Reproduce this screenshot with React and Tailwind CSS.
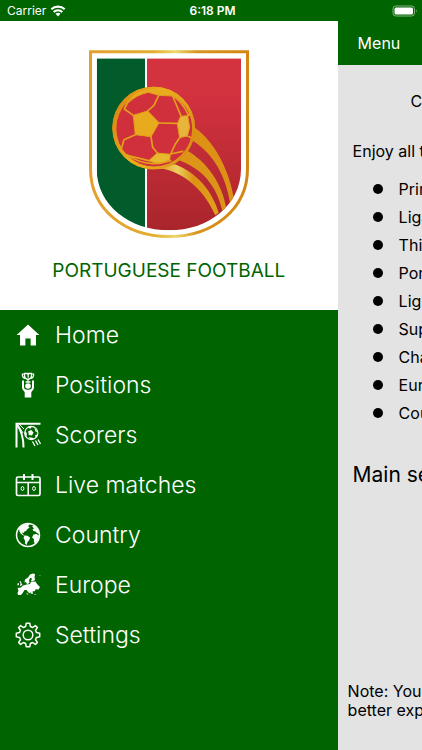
import React from "react";
import { IoMdHome } from "react-icons/io";

function Shield() {
  return (
    <svg viewBox="24 27 486 570" className="h-[190px] w-[162px]" role="img" aria-label="Portuguese Football crest">
      <defs>
        <linearGradient id="gold" x1="0" x2="1">
          <stop offset="0" stopColor="#e3a02f" />
          <stop offset="0.4" stopColor="#e2ad2c" />
          <stop offset="0.54" stopColor="#ecd76c" />
          <stop offset="0.68" stopColor="#d8941e" />
          <stop offset="1" stopColor="#d38612" />
        </linearGradient>
        <linearGradient id="ball" x1="0" x2="1" y1="0.3" y2="0.7">
          <stop offset="0" stopColor="#d98a12" />
          <stop offset="0.4" stopColor="#eaae1d" />
          <stop offset="0.75" stopColor="#e3a21c" />
          <stop offset="1" stopColor="#d98a12" />
        </linearGradient>
        <linearGradient id="red" x1="0" x2="0" y1="0" y2="1">
          <stop offset="0.2" stopColor="#d3323f" />
          <stop offset="1" stopColor="#a9252b" />
        </linearGradient>
        <linearGradient id="trail" x1="0" x2="1">
          <stop offset="0" stopColor="#dd9215" />
          <stop offset="0.35" stopColor="#ecd060" />
          <stop offset="0.6" stopColor="#dd9215" />
          <stop offset="1" stopColor="#e2a01c" />
        </linearGradient>
        <clipPath id="field">
          <path d="M50 55H483V386C483 495 385 571 267 571C149 571 50 495 50 386Z" />
        </clipPath>
        <clipPath id="sphere">
          <circle cx="221" cy="264" r="119" />
        </clipPath>
      </defs>
      <path d="M31.500 35.500H502.500V386C502.500 506 400 589.500 267 589.500C134 589.500 31.500 506 31.500 386Z" fill="#fff" stroke="url(#gold)" strokeWidth="9" />
      <g clipPath="url(#field)">
        <path d="M50 55H195V575H50Z" fill="#025b2b" />
        <path d="M201 55H483V575H201Z" fill="url(#red)" />
        <path d="M340 260C402 300 449 392 462 478L450 488C438 412 402 340 334 300Z" fill="#dd9215" />
        <path d="M318 330C382 365 427 432 439 506L427 512C410 440 370 385 288 358Z" fill="#dd9519" />
        <path d="M225 383C300 388 368 440 406 526L416 518C396 452 350 398 285 373Z" fill="url(#trail)" />
      </g>
      <circle cx="221" cy="264" r="124" fill="url(#ball)" />
      <circle cx="223" cy="266" r="114" fill="#cf303c" />
      <g clipPath="url(#sphere)">
        <g fill="#e9ab1e" stroke="#e2a01c" strokeWidth="3" strokeLinejoin="round">
          <path d="M160 226L203 213L237 248L213 290L166 284Z" />
          <path d="M292 252L302 229L323 227L329 262L322 288L299 293Z" fill="#e6b53a" />
          <path d="M145 188Q170 164 205 157L237 166L278 168L284 161Q250 138 214 138Q166 146 145 188Z" />
          <path d="M206 362L232 339L271 343L269 360L236 372Z" fill="#e8b92f" />
        </g>
        <g fill="none" stroke="#e2a01c" strokeWidth="5" strokeLinecap="round" strokeLinejoin="round">
          <path d="M237 249L291 250M203 213L222 196L236 166M160 226L133 207L146 182M166 284L132 299L124 326M213 290L218 322L232 339M278 168L303 228M299 293L286 312L272 342M322 288L336 294M206 362L142 346M272 342L308 334M323 227L332 222" />
          <path d="M278 168Q304 180 326 226M140 344Q200 386 272 362" />
        </g>
      </g>
      <circle cx="221" cy="264" r="120" fill="none" stroke="url(#ball)" strokeWidth="8" />
    </svg>
  );
}

const iconClass = "size-[26px]";

function TrophyIcon() {
  return (
    <svg viewBox="0 0 26 26" className={iconClass} fill="none" stroke="#fff" aria-hidden="true">
      <path d="M9.500 1.500H16.500V4C16.500 6 15 7 13 7.500C11 7 9.500 6 9.500 4Z" strokeWidth="1.300" />
      <path d="M9.500 2H7.300C7.300 4.500 8 6 10 6.300M16.500 2H18.700C18.700 4.500 18 6 16 6.300M13 7.500V10M12.300 3L13.200 2.500V5.800" strokeWidth="1.200" />
      <path d="M10.500 10H15.500" strokeWidth="1.500" />
      <circle cx="13" cy="14" r="2.800" fill="#fff" stroke="none" />
      <path d="M8 8.500V15C8 17.500 9.500 18.500 11 19M18 8.500V15C18 17.500 16.500 18.500 15 19" strokeWidth="2" />
      <path d="M8.500 16.500Q13 19 17.500 16.500L16.300 20.500V25.500H9.700V20.500Z" fill="#fff" stroke="none" />
    </svg>
  );
}

function ScorerIcon() {
  return (
    <svg viewBox="0 0 26 26" className={iconClass} fill="none" stroke="#fff" aria-hidden="true">
      <path d="M1.500 25.500V1.800H25.500" strokeWidth="2" />
      <path d="M2 3C6 8 8.500 16 8.500 25.500" strokeWidth="2" />
      <path d="M3 3L8 11M4 2L9 7" strokeWidth="1" />
      <circle cx="16.300" cy="11" r="6.600" strokeWidth="1.100" />
      <path d="M13.200 9.200L16.200 8L18.500 10.500L17 13.500L13.800 13ZM12.500 5.500L17 4.400L15.500 6.800ZM19.500 5.500L23 10.500L20.300 9.200ZM9.800 9L11.800 11L11.500 15L9.800 12.500ZM13.500 15.200L16.500 15.500L19.500 16.500L16 17.900ZM20 13.500L22.700 12L20.800 16Z" fill="#fff" stroke="none" />
      <path d="M17.500 19.500L20 24M20.500 18.500L23 23M23 17.500L25.500 22" strokeWidth="1.300" />
    </svg>
  );
}

function MatchIcon() {
  return (
    <svg viewBox="0 0 26 26" className={iconClass} fill="none" stroke="#fff" aria-hidden="true">
      <rect x="1.500" y="5" width="23.500" height="18.500" rx="1.500" strokeWidth="1.700" />
      <path d="M1.500 10.500H25M13.200 10.500V23.500" strokeWidth="1.500" />
      <path d="M9 2V8M17.500 2V8" strokeWidth="2" />
      <ellipse cx="7.500" cy="16.500" rx="1.400" ry="2" strokeWidth="1" />
      <ellipse cx="19" cy="16.500" rx="1.400" ry="2" strokeWidth="1" />
    </svg>
  );
}

function GlobeIcon() {
  return (
    <svg viewBox="0 0 26 26" className={iconClass} aria-hidden="true">
      <circle cx="13" cy="13" r="11.500" fill="none" stroke="#fff" strokeWidth="1.500" />
      <g fill="#fff">
        <path d="M4 6L8 3L12 1.800L15 2.500L13 4L14.500 5.500L12 7.500L11 9L9.500 9.500L8.500 11L7 10.500L8 12.500L10 13.500L8.500 13.500L6 12L4.500 9.500Z" />
        <path d="M9.500 13.500L12.500 13.800L15.200 15.800L14 18.500L12.500 20L11.500 23L10 21.500L10 18.500L8.500 16Z" />
        <path d="M17 4L19.500 4L23 8L24 12L22 11L20.500 9.500L18.500 9L17.500 7.500L19 6.500Z" />
        <path d="M18.500 12.500L21.500 12L24.300 14L23 18L20 22L18.800 19.500L19 17L17 15.500Z" />
      </g>
    </svg>
  );
}

function EuropeIcon() {
  return (
    <svg viewBox="0 0 26 26" className={iconClass} fill="#fff" aria-hidden="true">
      <path d="M9.500 10.500L10 7.500L13 5.500L15 2.500L18 1.500L20 2L19.500 5L20 8L17.500 9.500L16 9L17 6.500L15.500 5.800L14 8L14.500 10.500L13 12L11.500 11.500L11 10Z" />
      <path d="M2.500 16L6 15.500L8 13.500L11.500 12.500L15 12L16 9.800L20.500 9.500L22 12L25 15L23.500 17.500L20.500 17.200L20 19L17.500 19.500L18 22L16 21.500L14.500 18.800L15.500 21.500L13.500 20.500L11.500 18L9.500 18L8 20.500L6 23L3 23L2.500 21L3.500 18.500Z" />
      <path d="M4.500 9L6 9.500L6.500 11.500L7.500 13L5 14L5.500 11.500ZM2.500 11.500L4 11L4 13L2.500 13.500ZM11.500 20.500L13.500 22.500L12 22.500ZM23.500 3L25.500 3.500L25.500 4ZM19.500 22L21.500 22.500L19.500 23Z" />
    </svg>
  );
}

function GearIcon() {
  return (
    <svg viewBox="0 0 26 26" className={iconClass} fill="none" stroke="#fff" strokeWidth="1.500" strokeLinejoin="round" aria-hidden="true">
      <path d="M11.200 1.300H14.800L15.400 4.500L17.700 5.500L20.400 3.600L22.400 5.600L20.500 8.300L21.500 10.600L24.700 11.200V14.800L21.500 15.400L20.500 17.700L22.400 20.400L20.400 22.400L17.700 20.500L15.400 21.500L14.800 24.700H11.200L10.600 21.500L8.300 20.500L5.600 22.400L3.600 20.400L5.500 17.700L4.500 15.400L1.300 14.800V11.200L4.500 10.600L5.500 8.300L3.600 5.600L5.600 3.600L8.300 5.500L10.600 4.500Z" />
      <circle cx="13" cy="13" r="4.800" />
    </svg>
  );
}

function HomeIcon() {
  return <IoMdHome className="size-7 text-white" aria-hidden="true" />;
}

const menu = [
  ["Home", HomeIcon],
  ["Positions", TrophyIcon],
  ["Scorers", ScorerIcon],
  ["Live matches", MatchIcon],
  ["Country", GlobeIcon],
  ["Europe", EuropeIcon],
  ["Settings", GearIcon],
];

const competitions = [
  "Primeira Liga",
  "Liga 2",
  "Third division",
  "Portuguese Cup",
  "Ligue Cup",
  "Super Cup",
  "Champions League",
  "Europa League",
  "Country",
];

function StatusBar() {
  return (
    <header className="grid h-[21px] grid-cols-3 items-center bg-[#006400] pr-1 pl-[7px] text-xs text-white">
      <div className="flex items-center gap-1">
        <span>Carrier</span>
        <svg viewBox="0 0 16 12" className="h-3 w-4" fill="none" stroke="#fff" strokeWidth="2.200" aria-hidden="true">
          <path d="M1.300 4.300C5 .7 11 .7 14.700 4.300M3.700 7C6.200 4.700 9.800 4.700 12.300 7" />
          <path d="M5.500 8.800Q8 6.800 10.500 8.800L8 11.500Z" fill="#fff" stroke="none" />
        </svg>
      </div>
      <span className="text-center font-semibold">6:18 PM</span>
      <svg viewBox="0 0 26 12" className="h-3 w-[26px] justify-self-end" aria-hidden="true">
        <rect x="1" y="1" width="21.500" height="10" rx="2.800" fill="none" stroke="#83b583" />
        <rect x="2.500" y="2.500" width="18.500" height="7" rx="1.500" fill="#fff" />
        <path d="M24 4.200Q25.500 6 24 7.800Z" fill="#83b583" />
      </svg>
    </header>
  );
}

export default function App() {
  return (
    <div className="flex min-h-screen flex-col overflow-hidden font-['Inter','Liberation_Sans',sans-serif]">
      <StatusBar />
      <div className="flex flex-1">
        <aside className="w-4/5 shrink-0 bg-[#006400]">
          <div className="flex flex-col items-center bg-white pt-7 pb-6">
            <Shield />
            <h1 className="mt-[17px] text-[19px] leading-[30px] text-[#006400]">PORTUGUESE FOOTBALL</h1>
          </div>
          <nav>
            {menu.map(([label, Icon]) => (
              <a key={label} href="#" className="flex h-[50px] items-center gap-[13px] pl-3.5 text-[23px] font-[350] text-white">
                <span className="flex w-7 justify-center">
                  <Icon />
                </span>
                {label}
              </a>
            ))}
          </nav>
        </aside>
        <main className="flex w-full shrink-0 flex-col bg-[#e3e3e3] whitespace-nowrap text-black">
          <div className="flex h-11 items-center bg-[#006400] pl-5">
            <button type="button" className="text-base text-white">Menu</button>
          </div>
          <p className="mt-6 pl-[73px] text-base leading-6">Competitions</p>
          <p className="mt-[26px] pl-[15px] text-base leading-6">Enjoy all the</p>
          <ul className="mt-3 pl-[35px]">
            {competitions.map((name) => (
              <li key={name} className="flex h-7 items-center gap-4 text-base">
                <span className="size-2.5 rounded-full bg-black" />
                {name}
              </li>
            ))}
          </ul>
          <h2 className="mt-[33px] pl-[15px] text-[21px] leading-[30px]">Main sections</h2>
          <p className="mt-auto pb-[30px] pl-2.5 text-base leading-[19px]">
            Note: You can
            <br />
            better experience
          </p>
        </main>
      </div>
    </div>
  );
}
